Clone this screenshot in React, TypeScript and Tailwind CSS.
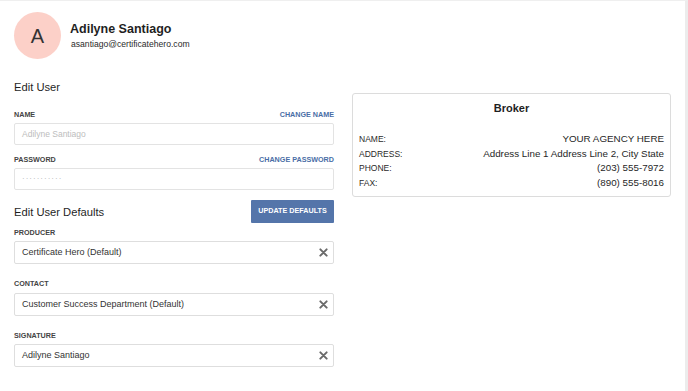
import React from "react";

const font = { fontFamily: '"Liberation Sans", Arial, sans-serif' };

function Label({ children }: { children: React.ReactNode }) {
  return <div className="text-[7.2px] leading-[10px] font-bold text-[#444]">{children}</div>;
}

function ClearIcon() {
  return (
    <svg width="9" height="9" viewBox="0 0 10 10" className="shrink-0">
      <path d="M1.5 1.5 L8.5 8.5 M8.5 1.5 L1.5 8.5" stroke="#6a6a6a" strokeWidth="2.2" strokeLinecap="round" />
    </svg>
  );
}

function SelectField({ value }: { value: string }) {
  return (
    <div className="h-[23px] border border-[#dedede] rounded-[2px] bg-white flex items-center justify-between pl-[7px] pr-[5px]">
      <span className="text-[9px] text-[#333]">{value}</span>
      <ClearIcon />
    </div>
  );
}

const brokerRows = [
  ["NAME:", "YOUR AGENCY HERE"],
  ["ADDRESS:", "Address Line 1 Address Line 2, City State"],
  ["PHONE:", "(203) 555-7972"],
  ["FAX:", "(890) 555-8016"],
];

export default function App() {
  return (
    <div
      className="w-full h-[391px] bg-white border-t border-[#efefef] border-r-[3px] border-r-[#ececec] overflow-hidden"
      style={font}
    >
      {/* Header */}
      <div className="flex items-center gap-[9px] pl-[14px] pt-[11px]">
        <div className="w-[47px] h-[47px] rounded-full bg-[#fcd0c8] flex items-center justify-center text-[20px] text-[#333]">
          A
        </div>
        <div className="flex flex-col">
          <div className="text-[12.5px] leading-[17px] font-bold text-[#1f1f1f]">Adilyne Santiago</div>
          <div className="text-[8.6px] leading-[12px] text-[#2a2a2a] pl-[1px]">asantiago@certificatehero.com</div>
        </div>
      </div>

      <div className="flex gap-[18px] pl-[14px]">
        {/* Left column */}
        <div className="w-[320px] mt-[20px]">
          <div className="text-[11.2px] leading-[16px] text-[#1f1f1f]">Edit User</div>

          <div className="mt-[15px] flex justify-between items-center">
            <Label>NAME</Label>
            <div className="text-[7.2px] leading-[10px] font-bold text-[#4a6ea6]">CHANGE NAME</div>
          </div>
          <div className="mt-[3px] h-[22px] border border-[#e3e3e3] rounded-[2px] flex items-center pl-[7px] text-[8.5px] text-[#bdbdbd]">
            Adilyne Santiago
          </div>

          <div className="mt-[10px] flex justify-between items-center">
            <Label>PASSWORD</Label>
            <div className="text-[7.2px] leading-[10px] font-bold text-[#4a6ea6]">CHANGE PASSWORD</div>
          </div>
          <div className="mt-[3px] h-[22px] border border-[#e3e3e3] rounded-[2px] flex items-center pl-[7px] text-[8px] text-[#b0b0b0] tracking-[1px]">
            ···········
          </div>

          <div className="mt-[10px] flex justify-between items-center">
            <div className="text-[11.2px] leading-[16px] text-[#1f1f1f]">Edit User Defaults</div>
            <button className="h-[23px] w-[83px] bg-[#5475aa] text-white text-[7.2px] font-bold rounded-[1px]">
              UPDATE DEFAULTS
            </button>
          </div>

          <div className="mt-[5px]">
            <Label>PRODUCER</Label>
          </div>
          <div className="mt-[3px]">
            <SelectField value="Certificate Hero (Default)" />
          </div>

          <div className="mt-[15px]">
            <Label>CONTACT</Label>
          </div>
          <div className="mt-[4px]">
            <SelectField value="Customer Success Department (Default)" />
          </div>

          <div className="mt-[15px]">
            <Label>SIGNATURE</Label>
          </div>
          <div className="mt-[3px]">
            <SelectField value="Adilyne Santiago" />
          </div>
        </div>

        {/* Right column */}
        <div className="w-[319px] mt-[34px]">
          <div className="h-[104px] border border-[#dcdcdc] rounded-[3px] px-[6px] pt-[7px]">
            <div className="text-center text-[11px] leading-[14px] font-bold text-[#1f1f1f]">Broker</div>
            <div className="mt-[17px] flex flex-col">
              {brokerRows.map(([k, v]) => (
                <div key={k} className="flex justify-between items-center h-[14.7px]">
                  <span className="text-[8.5px] text-[#2a2a2a]">{k}</span>
                  <span className="text-[9.8px] text-[#1f1f1f]">{v}</span>
                </div>
              ))}
            </div>
          </div>
        </div>
      </div>
    </div>
  );
}
